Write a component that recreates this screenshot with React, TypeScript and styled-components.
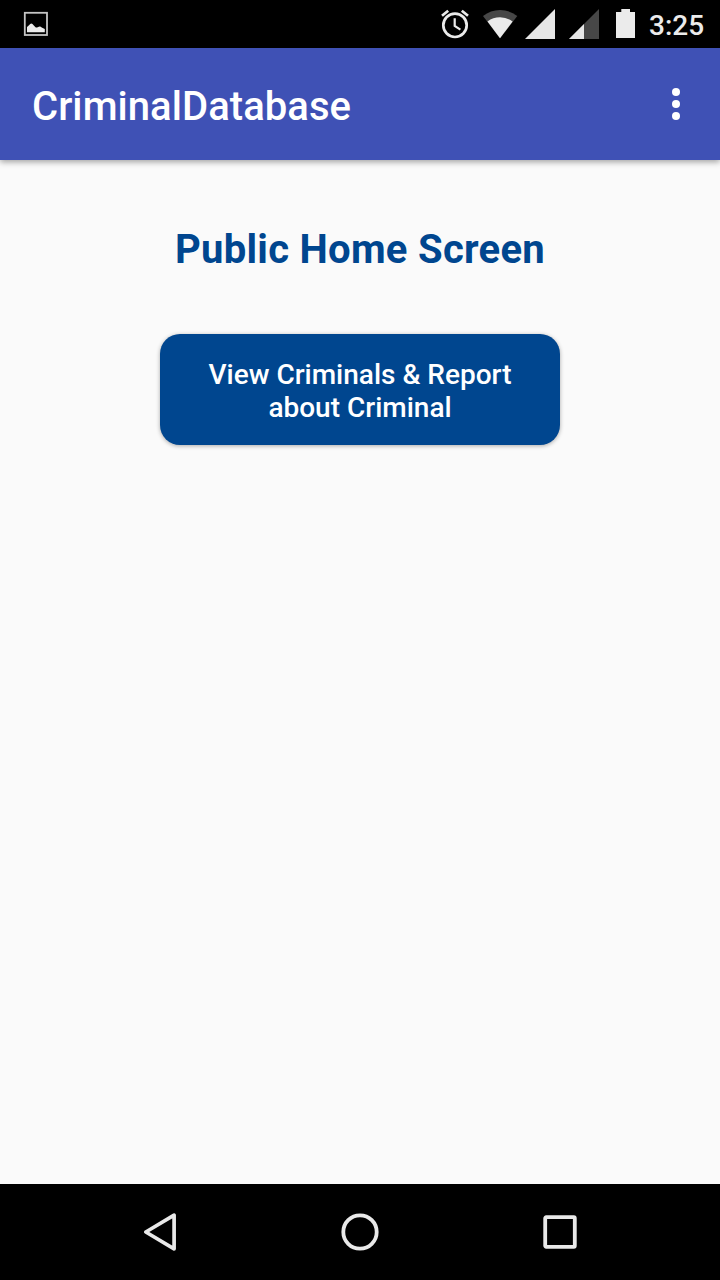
import React from "react";
import styled, { createGlobalStyle } from "styled-components";

const GlobalStyle = createGlobalStyle`
  *, *::before, *::after { box-sizing: border-box; }
  body { margin: 0; background: #fafafa; font-family: Roboto, "Liberation Sans", sans-serif; }
`;

const Screen = styled.div`
  display: flex;
  flex-direction: column;
  width: 720px;
  height: 1280px;
  overflow: hidden;
  background: #fafafa;
`;

const StatusBar = styled.header`
  display: flex;
  align-items: flex-start;
  justify-content: space-between;
  flex: none;
  height: 48px;
  padding: 0 16px 0 20px;
  background: #000;
`;

const StatusGroup = styled.div`
  display: flex;
`;

const Glyph = styled.svg`
  display: block;
  flex: none;
`;

const Clock = styled.span`
  width: 55px;
  margin-left: 8px;
  color: #ebebeb;
  font-size: 28px;
  font-weight: 500;
  line-height: 52px;
  white-space: nowrap;
`;

const AppBar = styled.div`
  display: flex;
  align-items: center;
  justify-content: space-between;
  flex: none;
  height: 112px;
  padding: 0 20px 0 32px;
  background: #3f51b5;
  box-shadow: 0 2px 6px rgba(0, 0, 0, 0.36);
`;

const AppTitle = styled.h1`
  margin: 6px 0 0;
  color: #fff;
  font-size: 40px;
  font-weight: 500;
  letter-spacing: 0.06px;
  line-height: 48px;
`;

const IconButton = styled.button`
  display: flex;
  align-items: center;
  justify-content: center;
  width: 48px;
  height: 48px;
  padding: 0;
  border: 0;
  background: none;
`;

const Content = styled.main`
  display: flex;
  flex: 1;
  flex-direction: column;
  align-items: center;
  padding-top: 66px;
`;

const Heading = styled.h2`
  margin: 0 0 60px;
  color: #00468f;
  font-size: 40px;
  font-weight: 700;
  letter-spacing: 0.28px;
  line-height: 48px;
`;

const ActionButton = styled.button`
  width: 400px;
  height: 111px;
  padding: 2px 40px 0;
  border: 0;
  border-radius: 20px;
  background: #00468f;
  box-shadow: 0 1px 4px rgba(0, 0, 0, 0.32);
  color: #fff;
  font-family: inherit;
  font-size: 28px;
  font-weight: 500;
  line-height: 33px;
`;

const NavBar = styled.nav`
  display: flex;
  align-items: center;
  justify-content: center;
  gap: 152px;
  flex: none;
  height: 96px;
  background: #000;
`;

export default function App() {
  return (
    <>
      <GlobalStyle />
      <Screen>
        <StatusBar>
          <Glyph width="32" height="48" viewBox="20 0 32 48">
            <rect x="24.8" y="12.8" width="22.2" height="22.2" fill="none" stroke="#c4c4c4" strokeWidth="1.8" />
            <path d="M27 32.3V27L29 25.2Q31.4 21.6 33.6 25.3L35.5 27.3Q37.2 28 38.8 26.8Q40.3 26 41.7 27.5L44.8 29V32.3Z" fill="#ebebeb" />
          </Glyph>
          <StatusGroup>
            <Glyph width="44" height="48" viewBox="437 0 44 48">
              <g fill="none" stroke="#ebebeb">
                <circle cx="455" cy="25.3" r="11.7" strokeWidth="2.7" />
                <path d="M454.7 18.2V26L460.4 29.6" strokeWidth="2.2" />
                <path d="M442 15.8L448.2 10.7M468 15.8L461.8 10.7" strokeWidth="2.7" />
              </g>
            </Glyph>
            <Glyph width="41" height="48" viewBox="481 0 41 48">
              <path d="M500 38.3L483 16Q490.5 10 500 10T517.3 16Z" fill="#474747" />
              <path d="M500 38.3L487.5 21.5Q493 17.3 500 17.3T512.6 21.5Z" fill="#ebebeb" />
            </Glyph>
            <Glyph width="42" height="48" viewBox="522 0 42 48">
              <path d="M525 39L555 9V39Z" fill="#e6e6e6" />
            </Glyph>
            <Glyph width="44" height="48" viewBox="564 0 44 48">
              <path d="M569 39L599 9V39Z" fill="#474747" />
              <path d="M569 39L584 24V39Z" fill="#e6e6e6" />
            </Glyph>
            <Glyph width="33" height="48" viewBox="608 0 33 48">
              <path d="M616 12H621.3V9H630V12H635V38H616Z" fill="#ebebeb" />
            </Glyph>
            <Clock>3:25</Clock>
          </StatusGroup>
        </StatusBar>
        <AppBar>
          <AppTitle>CriminalDatabase</AppTitle>
          <IconButton aria-label="More options">
            <Glyph width="48" height="48" viewBox="0 0 48 48" fill="#fff">
              <circle cx="24" cy="12" r="4" />
              <circle cx="24" cy="24" r="4" />
              <circle cx="24" cy="36" r="4" />
            </Glyph>
          </IconButton>
        </AppBar>
        <Content>
          <Heading>Public Home Screen</Heading>
          <ActionButton>
            View Criminals &amp; Report
            <br />
            about Criminal
          </ActionButton>
        </Content>
        <NavBar>
          <IconButton aria-label="Back">
            <Glyph width="48" height="48" viewBox="136 1208 48 48">
              <path d="M145.8 1232L174.1 1215.2V1248.8Z" fill="none" stroke="#e9e9e9" strokeWidth="3.7" strokeLinejoin="round" />
            </Glyph>
          </IconButton>
          <IconButton aria-label="Home">
            <Glyph width="48" height="48" viewBox="0 0 48 48">
              <circle cx="24" cy="24" r="16.7" fill="none" stroke="#e9e9e9" strokeWidth="3.8" />
            </Glyph>
          </IconButton>
          <IconButton aria-label="Recent apps">
            <Glyph width="48" height="48" viewBox="0 0 48 48">
              <rect x="9.2" y="9.2" width="29.6" height="29.6" rx="1" fill="none" stroke="#e9e9e9" strokeWidth="3.8" />
            </Glyph>
          </IconButton>
        </NavBar>
      </Screen>
    </>
  );
}
